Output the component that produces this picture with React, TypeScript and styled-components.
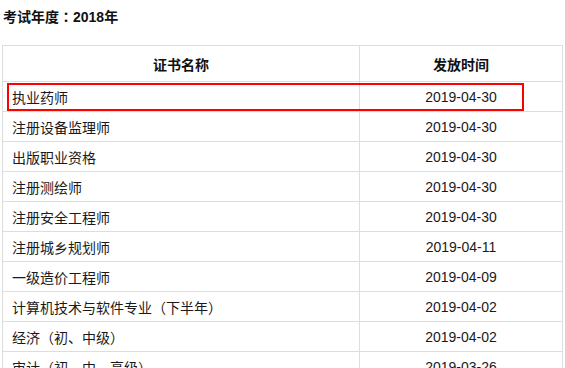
import styled, { createGlobalStyle } from 'styled-components';

const GlobalStyle = createGlobalStyle`
  body {
    margin: 0;
    background: #fff;
    color: #222;
    font-family: "Liberation Sans", Arial, "Noto Sans CJK SC", sans-serif;
    font-size: 14px;
  }
`;

const Page = styled.div`
  padding: 7px 3px 0 2px;
`;

const Title = styled.h3`
  margin: 0 0 18px 1px;
  height: 20px;
  line-height: 20px;
  font-family: "Liberation Sans", Arial, "Noto Sans CJK TC", sans-serif;
  font-size: 14px;
  font-weight: bold;
  color: #111;
`;

const TableWrap = styled.div`
  position: relative;
  width: 561px;
`;

const Table = styled.table`
  width: 100%;
  border-collapse: collapse;
  table-layout: fixed;
`;

const HeadCell = styled.th<{ width?: number }>`
  width: ${p => (p.width ? `${p.width}px` : 'auto')};
  height: 35px;
  padding: 0;
  border: 1px solid #ddd;
  text-align: center;
  font-weight: bold;
  color: #111;
`;

const Cell = styled.td<{ align?: 'left' | 'center' }>`
  height: 29px;
  padding: 0 0 0 ${p => (p.align === 'center' ? '0' : '9px')};
  border: 1px solid #ddd;
  text-align: ${p => p.align ?? 'left'};
  color: #1a1a1a;
  white-space: nowrap;
`;

// red annotation box drawn over the first data row
const Highlight = styled.div`
  position: absolute;
  left: 5px;
  top: 38px;
  width: 513px;
  height: 24px;
  border: 2px solid #f00;
  pointer-events: none;
`;

const rows: [string, string][] = [
  ['执业药师', '2019-04-30'],
  ['注册设备监理师', '2019-04-30'],
  ['出版职业资格', '2019-04-30'],
  ['注册测绘师', '2019-04-30'],
  ['注册安全工程师', '2019-04-30'],
  ['注册城乡规划师', '2019-04-11'],
  ['一级造价工程师', '2019-04-09'],
  ['计算机技术与软件专业（下半年）', '2019-04-02'],
  ['经济（初、中级）', '2019-04-02'],
  ['审计（初、中、高级）', '2019-03-26'],
];

export default function App() {
  return (
    <Page>
      <GlobalStyle />
      <Title>考试年度：2018年</Title>
      <TableWrap>
        <Table>
          <thead>
            <tr>
              <HeadCell width={356}>证书名称</HeadCell>
              <HeadCell>发放时间</HeadCell>
            </tr>
          </thead>
          <tbody>
            {rows.map(([name, date]) => (
              <tr key={name}>
                <Cell>{name}</Cell>
                <Cell align="center">{date}</Cell>
              </tr>
            ))}
          </tbody>
        </Table>
        <Highlight />
      </TableWrap>
    </Page>
  );
}
